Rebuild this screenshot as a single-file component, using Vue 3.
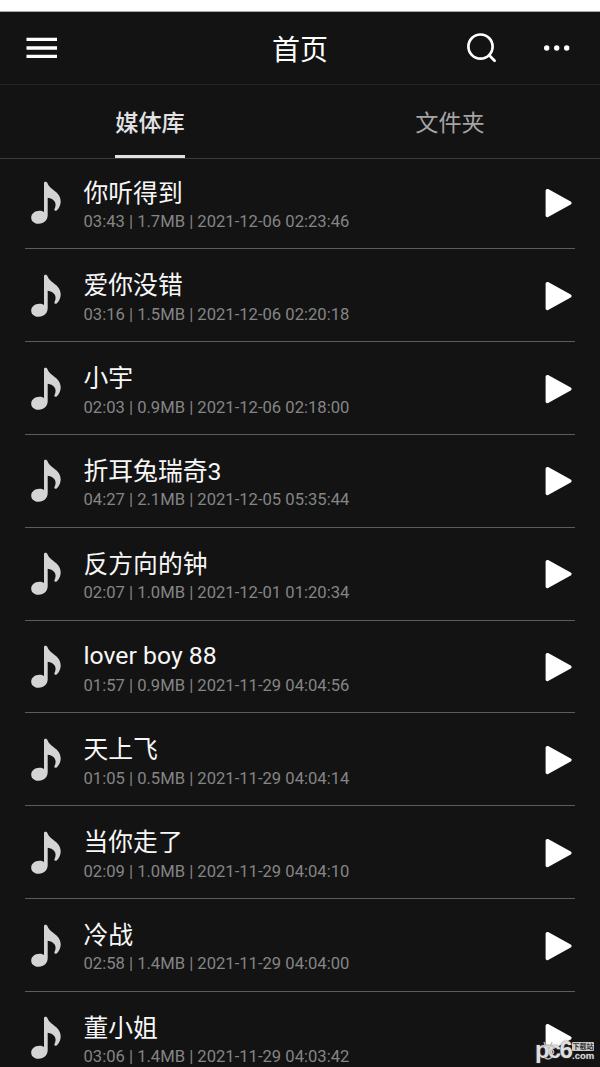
<script setup>
const songs = [
  ['你听得到', '03:43', '1.7MB', '2021-12-06 02:23:46'],
  ['爱你没错', '03:16', '1.5MB', '2021-12-06 02:20:18'],
  ['小宇', '02:03', '0.9MB', '2021-12-06 02:18:00'],
  ['折耳兔瑞奇3', '04:27', '2.1MB', '2021-12-05 05:35:44'],
  ['反方向的钟', '02:07', '1.0MB', '2021-12-01 01:20:34'],
  ['lover boy 88', '01:57', '0.9MB', '2021-11-29 04:04:56'],
  ['天上飞', '01:05', '0.5MB', '2021-11-29 04:04:14'],
  ['当你走了', '02:09', '1.0MB', '2021-11-29 04:04:10'],
  ['冷战', '02:58', '1.4MB', '2021-11-29 04:04:00'],
  ['董小姐', '03:06', '1.4MB', '2021-11-29 04:03:42'],
]
const isLatin = (text) => /^[\x20-\x7e]+$/.test(text)
</script>

<template>
  <div class="screen">
    <div class="status"></div>
    <header class="bar">
      <svg class="menu" width="32" height="24" viewBox="0 0 32 24">
        <path d="M.5 3.4H31M.5 12H31M.5 20.4H31" stroke="#fff" stroke-width="3.4" />
      </svg>
      <h1>首页</h1>
      <svg class="search" width="32" height="32" viewBox="0 0 32 32" fill="none" stroke="#fff" stroke-width="2.7" stroke-linecap="round">
        <circle cx="14.5" cy="14.6" r="12.1" />
        <path d="M23.2 23.3L28.6 28.7" />
      </svg>
      <svg class="more" width="28" height="8" viewBox="0 0 28 8" fill="#fff">
        <circle cx="3.7" cy="4" r="2.7" /><circle cx="13.7" cy="4" r="2.7" /><circle cx="23.7" cy="4" r="2.7" />
      </svg>
    </header>
    <nav class="tabs">
      <div class="tab active"><span>媒体库</span></div>
      <div class="tab"><span>文件夹</span></div>
    </nav>
    <main class="list">
      <div v-for="s in songs" :key="s[0]" class="row">
        <svg class="note" width="40" height="50" viewBox="0 0 40 50">
          <path d="M19 5.2C19 3.6 21.7 3.2 22.4 5C24.8 12.3 35.7 13.3 35.7 23.5C35.7 27 34 30.4 31.7 32.4C30.6 33.4 28.8 32.5 29.5 31C32.5 25 29.2 20.6 22.7 19.7V37C22.7 41.8 19 45.8 13.7 45.8C9.4 45.8 6.2 43.2 6.2 39.7C6.2 35.6 10 32.8 14.4 32.8C16.3 32.8 17.8 33.2 19 33.9Z" fill="#d4d4d4" />
        </svg>
        <div class="info">
          <div class="title" :class="{ latin: isLatin(s[0]) }">{{ s[0] }}</div>
          <div class="meta">{{ s[1] }} | {{ s[2] }} | {{ s[3] }}</div>
        </div>
        <svg class="play" width="28" height="30" viewBox="0 0 28 30">
          <path d="M2.3 2.6L24.9 15L2.3 27.4Z" fill="#fff" stroke="#fff" stroke-width="3.4" stroke-linejoin="round" />
        </svg>
      </div>
    </main>
    <div class="watermark">
      <span class="pc">pc6</span>
      <span class="site"><span class="badge">下载站</span><span class="com">.com</span></span>
      <svg class="face" width="18" height="20" viewBox="0 0 18 20" fill="none" stroke="#bbb" stroke-width="1.3">
        <path d="M6 4L5 1M12 4L13 1M3 6Q9 2 15 6M5 16Q9 20 13 16" />
        <circle cx="13" cy="11" r="1.8" />
      </svg>
    </div>
  </div>
</template>

<style>
body { margin: 0; background: #131313; }
</style>

<style scoped>
.screen {
  position: relative;
  width: 600px;
  height: 1067px;
  overflow: hidden;
  background: #131313;
  color: #fff;
  font-family: Roboto, "Noto Sans CJK SC", sans-serif;
}
.status { box-sizing: border-box; height: 12px; background: #fff; border-bottom: 1px solid #aaa; }
.bar {
  box-sizing: border-box;
  height: 73px;
  display: flex;
  align-items: center;
  padding: 0 29px 0 26px;
  border-bottom: 1px solid #232323;
}
h1 {
  margin: 5px 0 0 214px;
  width: 56px;
  font-size: 28px;
  line-height: 40px;
  font-weight: 400;
  white-space: nowrap;
}
.search { margin-left: 138px; }
.more { margin-left: 45px; }
.menu, .search, .more { flex: none; }
.tabs {
  box-sizing: border-box;
  height: 74px;
  display: flex;
  border-bottom: 1px solid #3b3b3b;
}
.tab { flex: 1; display: flex; justify-content: center; color: #a5a5a5; font-size: 23.2px; }
.tab span { box-sizing: border-box; height: 73px; line-height: 77px; }
.active { color: #e3e3e3; font-weight: 500; }
.active span { border-bottom: 3px solid #e4e0e2; }
.list { margin-top: -2.4px; }
.row {
  box-sizing: border-box;
  height: 92.82px;
  margin: 0 25px;
  border-bottom: 1px solid #5c5c5c;
  display: flex;
  align-items: flex-start;
}
.note { flex: none; margin-top: 21.4px; }
.info { flex: 1; margin-left: 18.5px; padding-top: 17px; white-space: nowrap; }
.title { height: 37.3px; font-size: 24.8px; line-height: 39.8px; color: #f7f7f7; }
.title.latin { line-height: 36.6px; }
.meta { font-size: 16.63px; line-height: 22px; color: #858585; }
.play { flex: none; margin: 31.4px 2.5px 0 0; }
.watermark {
  position: absolute;
  left: 535px;
  top: 1034px;
  display: flex;
  color: #dedede;
  font-family: "Liberation Sans", "Noto Sans CJK SC", sans-serif;
  font-weight: 700;
  text-shadow: 0 0 2px #555;
}
.pc { width: 37px; font-size: 24px; line-height: 32px; letter-spacing: -1.8px; }
.site { display: flex; flex-direction: column; padding-top: 8px; }
.badge {
  width: 22px;
  height: 9px;
  line-height: 9px;
  font-size: 7px;
  text-align: center;
  background: #ccc;
  color: #333;
  border-radius: 1px;
  text-shadow: none;
  white-space: nowrap;
}
.com { font-size: 9.5px; line-height: 10px; height: 10px; }
.face { position: absolute; left: 4px; top: 7px; }
</style>
